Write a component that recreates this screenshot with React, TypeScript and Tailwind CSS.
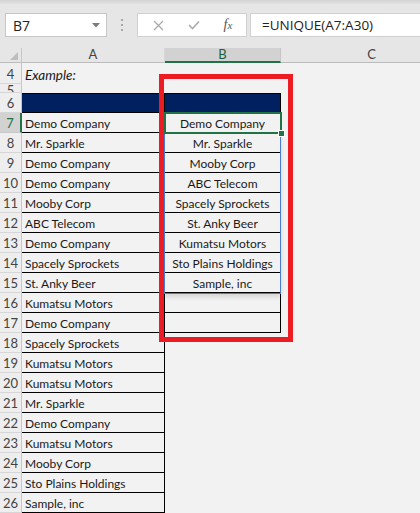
import React from "react";

const colA = [
  "Demo Company",
  "Mr. Sparkle",
  "Demo Company",
  "Demo Company",
  "Mooby Corp",
  "ABC Telecom",
  "Demo Company",
  "Spacely Sprockets",
  "St. Anky Beer",
  "Kumatsu Motors",
  "Demo Company",
  "Spacely Sprockets",
  "Kumatsu Motors",
  "Kumatsu Motors",
  "Mr. Sparkle",
  "Demo Company",
  "Kumatsu Motors",
  "Mooby Corp",
  "Sto Plains Holdings",
  "Sample, inc",
];

const colB = [
  "Demo Company",
  "Mr. Sparkle",
  "Mooby Corp",
  "ABC Telecom",
  "Spacely Sprockets",
  "St. Anky Beer",
  "Kumatsu Motors",
  "Sto Plains Holdings",
  "Sample, inc",
  "",
  "",
];

const cellFont = { fontFamily: "Lato, 'Liberation Sans', sans-serif" };
const uiFont = { fontFamily: "'Open Sans', 'Noto Sans', sans-serif" };

function RowHeader({ n, active }: { n: number; active?: boolean }) {
  return (
    <div
      className={
        active
          ? "w-[22px] shrink-0 flex items-center justify-center pt-[3px] bg-[#d2d2d2] border-r-2 border-r-[#217346] border-b border-b-[#c8c8c8] text-[#217346] text-[13px] overflow-hidden"
          : "w-[22px] shrink-0 flex items-center justify-center pt-[3px] bg-[#eeeeee] border-r border-r-[#c6c6c6] border-b border-b-[#d6d6d6] text-[#444444] text-[13px] overflow-hidden"
      }
    >
      {n}
    </div>
  );
}

export default function App() {
  return (
    <div
      className="relative w-[420px] h-[513px] overflow-hidden bg-[#f2f2f2] text-[#1a1a1a]"
      style={cellFont}
    >
      {/* Toolbar */}
      <div className="h-[48px] bg-[#e6e6e6]">
        <div className="h-[4px] bg-gradient-to-b from-[#d4d4d4] to-[#e2e2e2]" />
        <div className="flex pt-[9px]">
          <div
            className="ml-[5px] w-[102px] h-[24px] bg-white border border-[#c6c6c6] flex items-center justify-between pl-[7px] pr-[6px] text-[14px] text-[#222]"
            style={uiFont}
          >
            <span>B7</span>
            <svg width="8" height="5" viewBox="0 0 8 5">
              <path d="M0 0 L8 0 L4 4.5 Z" fill="#7a7a7a" />
            </svg>
          </div>
          <div className="w-[30px] flex flex-col items-center justify-center gap-[3px]">
            <span className="w-[2px] h-[2px] bg-[#a8a8a8]" />
            <span className="w-[2px] h-[2px] bg-[#a8a8a8]" />
            <span className="w-[2px] h-[2px] bg-[#a8a8a8]" />
          </div>
          <div className="w-[110px] h-[24px] bg-white border border-[#d0d0d0] flex items-center">
            <div className="w-[40px] flex justify-center">
              <svg width="11" height="11" viewBox="0 0 11 11">
                <path d="M1 1 L10 10 M10 1 L1 10" stroke="#ababab" strokeWidth="1.3" />
              </svg>
            </div>
            <div className="w-[32px] flex justify-center">
              <svg width="12" height="10" viewBox="0 0 12 10">
                <path d="M1 5 L4.5 8.5 L11 1.5" stroke="#ababab" strokeWidth="1.6" fill="none" />
              </svg>
            </div>
            <div className="w-[36px] flex justify-center">
              <span
                className="italic text-[14px] text-[#555] leading-none"
                style={{ fontFamily: "'Liberation Serif', serif" }}
              >
                f<span className="text-[11px]">x</span>
              </span>
            </div>
          </div>
          <div
            className="ml-[3px] flex-1 h-[24px] bg-white border border-r-0 border-[#d0d0d0] flex items-center pl-[11px] text-[13.5px] text-[#222]"
            style={uiFont}
          >
            =UNIQUE(A7:A30)
          </div>
        </div>
      </div>

      {/* Column header */}
      <div className="flex h-[15px] bg-[#e6e6e6] text-[13px] text-[#444]">
        <div className="w-[22px] shrink-0 border-r border-r-[#c6c6c6] border-b border-b-[#bcbcbc] flex items-end justify-end pr-[3px] pb-[2px]">
          <svg width="8" height="8" viewBox="0 0 8 8">
            <path d="M8 0 L8 8 L0 8 Z" fill="#bdbdbd" />
          </svg>
        </div>
        <div className="w-[143px] shrink-0 border-r border-r-[#d6d6d6] border-b border-b-[#bcbcbc] flex items-center justify-center">
          A
        </div>
        <div className="w-[116px] shrink-0 bg-[#d2d2d2] border-r border-r-[#c6c6c6] border-b-2 border-b-[#217346] flex items-center justify-center text-[#1e5e3a]">
          B
        </div>
        <div className="flex-1 border-b border-b-[#bcbcbc] flex items-center justify-center pl-[42px]">
          C
        </div>
      </div>

      {/* Row 4 */}
      <div className="flex h-[21px]">
        <RowHeader n={4} />
        <div className="w-[143px] shrink-0 flex items-center pt-[3px] pl-[3px] italic text-[13.5px]">Example:</div>
        <div className="flex-1" />
      </div>
      {/* Row 5 */}
      <div className="flex h-[9px] leading-[9px]">
        <div className="w-[22px] shrink-0 flex items-start justify-center bg-[#eeeeee] border-r border-r-[#c6c6c6] border-b border-b-[#d6d6d6] text-[#444444] text-[13px] overflow-hidden">
          <span className="leading-[14px] -mt-[1px]">5</span>
        </div>
        <div className="flex-1" />
      </div>
      {/* Row 6 */}
      <div className="flex h-[20px]">
        <RowHeader n={6} />
        <div className="w-[143px] shrink-0 bg-[#002060] border-t border-b border-r border-black" />
        <div className="w-[116px] shrink-0 bg-[#002060] border-t border-b border-r border-black" />
        <div className="flex-1" />
      </div>
      {/* Rows 7-26 */}
      {colA.map((a, i) => {
        const n = i + 7;
        const b = i < colB.length ? colB[i] : null;
        return (
          <div key={n} className="flex h-[20px] text-[12px]">
            <RowHeader n={n} active={n === 7} />
            <div className="w-[143px] shrink-0 border-b border-r border-black flex items-center pt-[3px] pl-[3px] whitespace-nowrap overflow-hidden">
              {a}
            </div>
            {b !== null ? (
              <div className="w-[116px] shrink-0 border-b border-r border-black flex items-center justify-center pt-[3px] whitespace-nowrap overflow-hidden">
                {b}
              </div>
            ) : (
              <div className="w-[116px] shrink-0" />
            )}
            <div className="flex-1" />
          </div>
        );
      })}

      {/* Spill range border */}
      <div className="absolute left-[164px] top-[133px] w-[117px] h-[161px] border border-t-0 border-[#4a7bd0] shadow-[0_3px_5px_rgba(0,0,0,0.12)]" />
      {/* Active cell selection */}
      <div className="absolute left-[164px] top-[112px] w-[118px] h-[22px] border-2 border-[#217346]" />
      <div className="absolute left-[278px] top-[130px] w-[7px] h-[7px] bg-[#217346] border border-white" />
      {/* Red highlight rectangle */}
      <div className="absolute left-[159px] top-[74px] w-[134px] h-[268px] border-[5px] border-[#ed1c24]" />
    </div>
  );
}
